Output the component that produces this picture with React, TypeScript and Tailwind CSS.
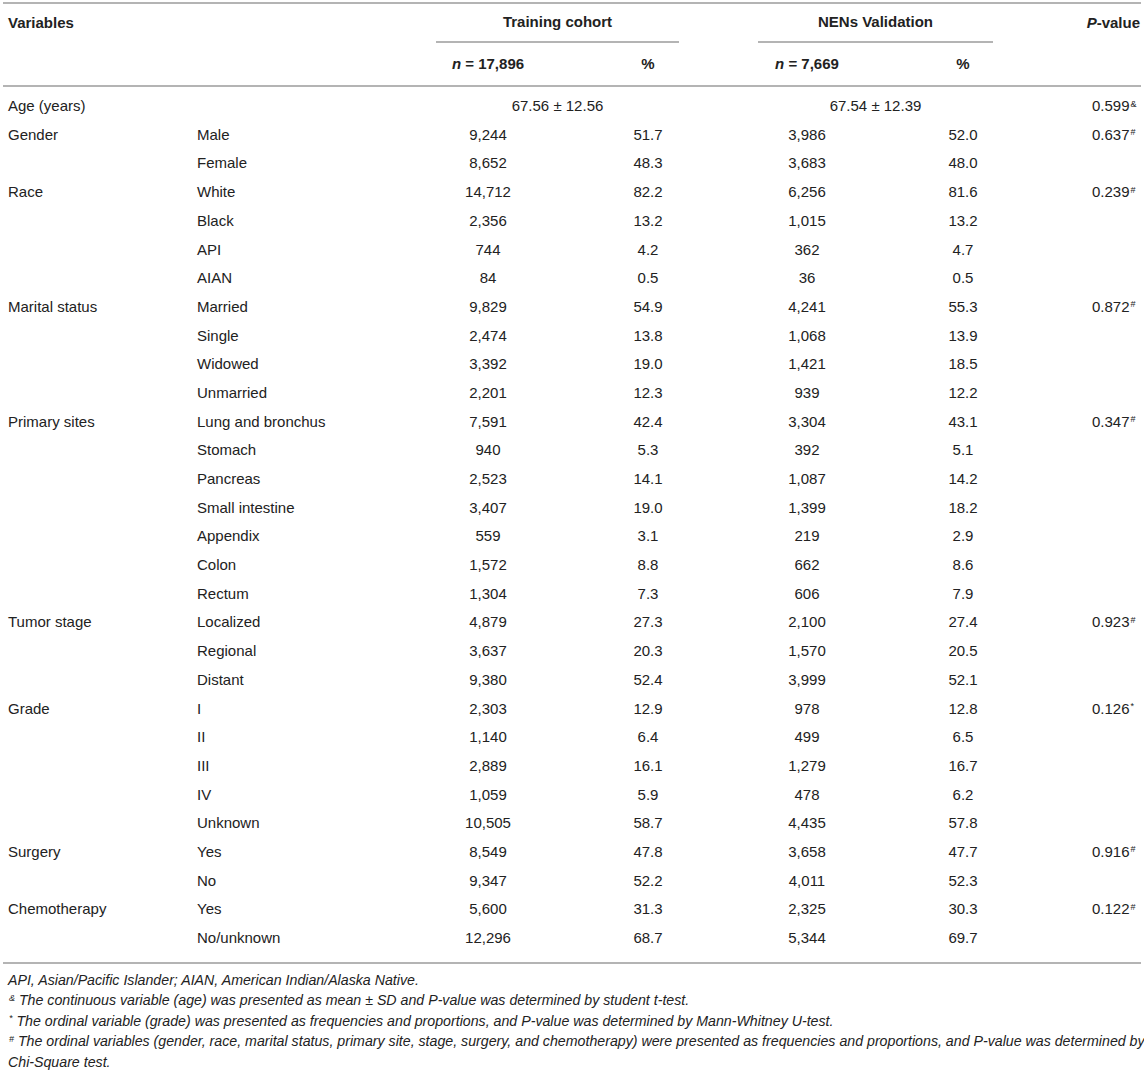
type Row = {
  v?: string;
  s: string;
  a: string;
  b: string;
  c: string;
  d: string;
  p?: string;
  m?: string;
};

const rows: Row[] = [
  { v: "Gender", s: "Male", a: "9,244", b: "51.7", c: "3,986", d: "52.0", p: "0.637", m: "#" },
  { s: "Female", a: "8,652", b: "48.3", c: "3,683", d: "48.0" },
  { v: "Race", s: "White", a: "14,712", b: "82.2", c: "6,256", d: "81.6", p: "0.239", m: "#" },
  { s: "Black", a: "2,356", b: "13.2", c: "1,015", d: "13.2" },
  { s: "API", a: "744", b: "4.2", c: "362", d: "4.7" },
  { s: "AIAN", a: "84", b: "0.5", c: "36", d: "0.5" },
  { v: "Marital status", s: "Married", a: "9,829", b: "54.9", c: "4,241", d: "55.3", p: "0.872", m: "#" },
  { s: "Single", a: "2,474", b: "13.8", c: "1,068", d: "13.9" },
  { s: "Widowed", a: "3,392", b: "19.0", c: "1,421", d: "18.5" },
  { s: "Unmarried", a: "2,201", b: "12.3", c: "939", d: "12.2" },
  { v: "Primary sites", s: "Lung and bronchus", a: "7,591", b: "42.4", c: "3,304", d: "43.1", p: "0.347", m: "#" },
  { s: "Stomach", a: "940", b: "5.3", c: "392", d: "5.1" },
  { s: "Pancreas", a: "2,523", b: "14.1", c: "1,087", d: "14.2" },
  { s: "Small intestine", a: "3,407", b: "19.0", c: "1,399", d: "18.2" },
  { s: "Appendix", a: "559", b: "3.1", c: "219", d: "2.9" },
  { s: "Colon", a: "1,572", b: "8.8", c: "662", d: "8.6" },
  { s: "Rectum", a: "1,304", b: "7.3", c: "606", d: "7.9" },
  { v: "Tumor stage", s: "Localized", a: "4,879", b: "27.3", c: "2,100", d: "27.4", p: "0.923", m: "#" },
  { s: "Regional", a: "3,637", b: "20.3", c: "1,570", d: "20.5" },
  { s: "Distant", a: "9,380", b: "52.4", c: "3,999", d: "52.1" },
  { v: "Grade", s: "I", a: "2,303", b: "12.9", c: "978", d: "12.8", p: "0.126", m: "*" },
  { s: "II", a: "1,140", b: "6.4", c: "499", d: "6.5" },
  { s: "III", a: "2,889", b: "16.1", c: "1,279", d: "16.7" },
  { s: "IV", a: "1,059", b: "5.9", c: "478", d: "6.2" },
  { s: "Unknown", a: "10,505", b: "58.7", c: "4,435", d: "57.8" },
  { v: "Surgery", s: "Yes", a: "8,549", b: "47.8", c: "3,658", d: "47.7", p: "0.916", m: "#" },
  { s: "No", a: "9,347", b: "52.2", c: "4,011", d: "52.3" },
  { v: "Chemotherapy", s: "Yes", a: "5,600", b: "31.3", c: "2,325", d: "30.3", p: "0.122", m: "#" },
  { s: "No/unknown", a: "12,296", b: "68.7", c: "5,344", d: "69.7" },
];

const grid = "grid grid-cols-[189px_247px_104px_216px_102px_210px_76px]";

function Rule() {
  return <div className="mx-[3px] h-[2px] bg-[#b4b4b4]" />;
}

function Mark({ m }: { m: string }) {
  return <sup className="ml-[1px] text-[9px] leading-none">{m}</sup>;
}

export default function App() {
  return (
    <div
      className="w-[1144px] bg-white pt-[2px] text-[15px] text-[#222]"
      style={{ fontFamily: '"Liberation Sans", Arial, sans-serif' }}
    >
      <Rule />

      {/* header */}
      <div className={`${grid} h-[39px] items-center font-bold`}>
        <div className="pl-[8px]">Variables</div>
        <div />
        <div className="col-span-2 mr-[77px] flex h-full flex-col">
          <div className="flex flex-1 items-center justify-center">Training cohort</div>
          <div className="h-[2px] bg-[#b4b4b4]" />
        </div>
        <div className="col-span-2 ml-[2px] mr-[75px] flex h-full flex-col">
          <div className="flex flex-1 items-center justify-center">NENs Validation</div>
          <div className="h-[2px] bg-[#b4b4b4]" />
        </div>
        <div className="pr-[4px] text-right">
          <i>P</i>-value
        </div>
      </div>
      <div className={`${grid} h-[42px] items-center font-bold`}>
        <div />
        <div />
        <div className="text-center whitespace-nowrap">
          <i>n</i> = 17,896
        </div>
        <div className="text-center">%</div>
        <div className="text-center whitespace-nowrap">
          <i>n</i> = 7,669
        </div>
        <div className="text-center">%</div>
        <div />
      </div>
      <Rule />

      {/* body */}
      <div className="pt-[5px] pb-[9px]">
        <div className={`${grid} h-[28.69px] items-center`}>
          <div className="pl-[8px]">Age (years)</div>
          <div />
          <div className="col-span-2 mr-[77px] text-center">67.56 ± 12.56</div>
          <div className="col-span-2 ml-[2px] mr-[75px] text-center">67.54 ± 12.39</div>
          <div className="pl-[24px] whitespace-nowrap">
            0.599
            <Mark m="&" />
          </div>
        </div>
        {rows.map((r, i) => (
          <div key={i} className={`${grid} h-[28.69px] items-center`}>
            <div className="pl-[8px]">{r.v}</div>
            <div className="pl-[8px]">{r.s}</div>
            <div className="text-center">{r.a}</div>
            <div className="text-center">{r.b}</div>
            <div className="text-center">{r.c}</div>
            <div className="text-center">{r.d}</div>
            <div className="pl-[24px] whitespace-nowrap">
              {r.p}
              {r.m ? <Mark m={r.m} /> : null}
            </div>
          </div>
        ))}
      </div>
      <Rule />

      {/* footnotes */}
      <div className="px-[8px] pt-[6px] text-[14.2px] leading-[20.5px] italic">
        <p>API, Asian/Pacific Islander; AIAN, American Indian/Alaska Native.</p>
        <p>
          <Mark m="&" /> The continuous variable (age) was presented as mean ± SD and P-value was
          determined by student t-test.
        </p>
        <p>
          <Mark m="*" /> The ordinal variable (grade) was presented as frequencies and proportions, and
          P-value was determined by Mann-Whitney U-test.
        </p>
        <p className="whitespace-nowrap">
          <Mark m="#" /> The ordinal variables (gender, race, marital status, primary site, stage,
          surgery, and chemotherapy) were presented as frequencies and proportions, and P-value was
          determined by
        </p>
        <p>Chi-Square test.</p>
      </div>
    </div>
  );
}
